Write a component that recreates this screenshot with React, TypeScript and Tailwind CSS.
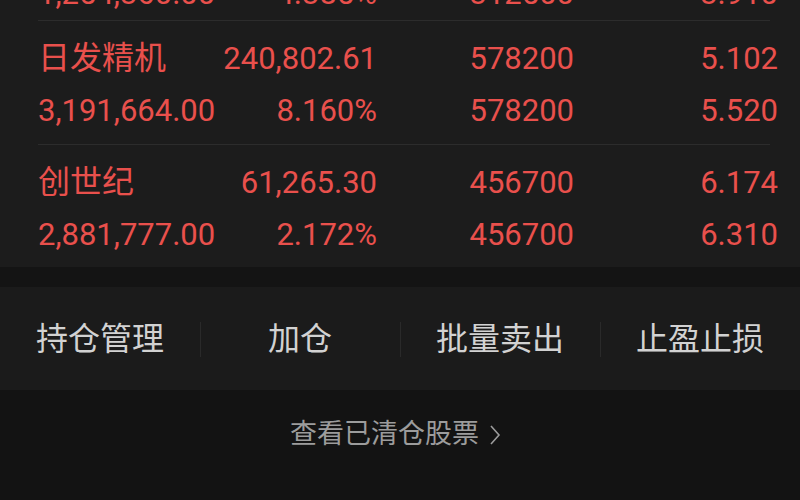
import React from 'react'

type Row = [string, string, string, string]

const groups: Row[][] = [
  [
    ['1,254,360.00', '4.385%', '312500', '3.910'],
  ],
  [
    ['日发精机', '240,802.61', '578200', '5.102'],
    ['3,191,664.00', '8.160%', '578200', '5.520'],
  ],
  [
    ['创世纪', '61,265.30', '456700', '6.174'],
    ['2,881,777.00', '2.172%', '456700', '6.310'],
  ],
]

const actions = ['持仓管理', '加仓', '批量卖出', '止盈止损']

function StockRow({ row, isName }: { row: Row; isName: boolean }) {
  return (
    <div className="grid grid-cols-[180px_159px_197px_204px] h-[52px] items-center text-[31px] leading-none text-[#e9504c]">
      <div className={isName ? 'whitespace-nowrap text-[32px]' : 'whitespace-nowrap'}>{row[0]}</div>
      <div className="text-right whitespace-nowrap">{row[1]}</div>
      <div className="text-right whitespace-nowrap">{row[2]}</div>
      <div className="text-right whitespace-nowrap">{row[3]}</div>
    </div>
  )
}

export default function App() {
  return (
    <div
      className="w-[800px] h-[500px] overflow-hidden bg-[#131313] flex flex-col"
      style={{ fontFamily: 'Roboto, "Noto Sans CJK SC", sans-serif' }}
    >
      {/* holdings list, first group scrolled partly out of view */}
      <div className="bg-[#1c1c1c] h-[267px] overflow-hidden pl-[38px]">
        <div className="-mt-[33px]">
          {groups.map((g, i) => (
            <div
              key={i}
              className={i > 0 ? 'border-t border-[#2c2c2c] mr-[30px] pt-[11px] pb-[8px]' : 'pb-[1px]'}
            >
              {g.map((r, j) => (
                <StockRow key={j} row={r} isName={i > 0 && j === 0} />
              ))}
            </div>
          ))}
        </div>
      </div>

      <div className="h-[20px] bg-[#141414]" />

      {/* action bar */}
      <div className="bg-[#1b1b1b] h-[103px] grid grid-cols-4 items-center">
        {actions.map((a, i) => (
          <div key={a} className="relative flex items-center justify-center h-full">
            {i > 0 && <div className="absolute left-0 top-[35px] h-[35px] w-px bg-[#2a2a2a]" />}
            <span className="text-[32px] text-[#d2d2d2] leading-none">{a}</span>
          </div>
        ))}
      </div>

      {/* cleared stocks link */}
      <div className="flex-1 flex items-start justify-center pt-[31px]">
        <div className="flex items-center gap-[10px] text-[#9c9c9c] pr-[9px]">
          <span className="text-[27px] leading-none">查看已清仓股票</span>
          <svg width="12" height="22" viewBox="0 0 12 22" fill="none" stroke="currentColor" strokeWidth="1.6">
            <path d="M2 2 L10 11 L2 20" />
          </svg>
        </div>
      </div>
    </div>
  )
}
